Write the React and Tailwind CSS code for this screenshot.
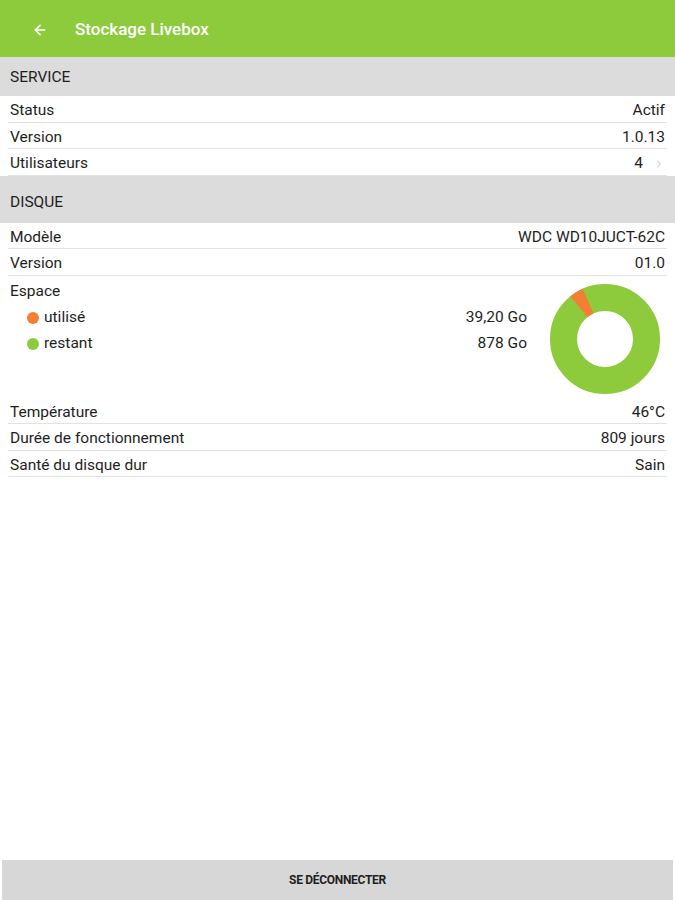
import { ArrowLeft, ChevronRight } from 'lucide-react';

const GREEN = '#8dcb3c';
const ORANGE = '#f57e37';

const Row = ({ label, value, chevron }) => (
  <div className="mx-2 flex h-[26.5px] items-center justify-between border-b border-[#e2e2e2] px-[2px] pt-[4px] text-[15.5px] text-[#1e1e1e]">
    <span>{label}</span>
    <span className="flex items-center">
      {value}
      {chevron && <ChevronRight className="ml-[10px] h-3 w-3 text-[#bdbdbd]" strokeWidth={2} />}
    </span>
  </div>
);

const Section = ({ title, tall }) => (
  <div className={`flex items-center bg-[#dcdcdc] px-[10px] text-[15.5px] text-[#1e1e1e] ${tall ? 'h-[47px] pt-[8px]' : 'h-[39px] pt-[3px]'}`}>
    {title}
  </div>
);

// donut: used slice sits between -39deg and -24deg (from 12 o'clock)
const Donut = () => {
  const cx = 55;
  const cy = 55;
  const r = 41.5;
  const pt = (deg) => {
    const a = ((deg - 90) * Math.PI) / 180;
    return [cx + r * Math.cos(a), cy + r * Math.sin(a)];
  };
  const [x1, y1] = pt(-39);
  const [x2, y2] = pt(-24);
  return (
    <svg width="110" height="110" viewBox="0 0 110 110">
      <circle cx={cx} cy={cy} r={r} fill="none" stroke={GREEN} strokeWidth="27" />
      <path d={`M ${x1} ${y1} A ${r} ${r} 0 0 1 ${x2} ${y2}`} fill="none" stroke={ORANGE} strokeWidth="27" />
    </svg>
  );
};

export default function App() {
  return (
    <div className="flex h-[900px] w-[675px] flex-col bg-white" style={{ fontFamily: 'Roboto, "Liberation Sans", sans-serif' }}>
      <div className="flex h-[57px] items-center bg-[#8dcb3c] pt-[2px] text-white">
        <ArrowLeft className="ml-[32px] h-[16px] w-[16px]" strokeWidth={2.5} />
        <span className="ml-[27px] text-[17px] font-medium">Stockage Livebox</span>
      </div>

      <Section title="SERVICE" />
      <Row label="Status" value="Actif" />
      <Row label="Version" value="1.0.13" />
      <Row label="Utilisateurs" value="4" chevron />

      <Section title="DISQUE" tall />
      <Row label="Modèle" value="WDC WD10JUCT-62C" />
      <Row label="Version" value="01.0" />

      <div className="mx-2 flex h-[122px] px-[2px] text-[15.5px] text-[#1e1e1e]">
        <div className="flex flex-1 flex-col pt-[3px]">
          <div className="flex h-[26px] items-center">Espace</div>
          <div className="flex h-[26px] items-center justify-between pl-[17px]">
            <span className="flex items-center">
              <span className="mr-[5px] h-[12px] w-[12px] rounded-full bg-[#f57e37]" />
              utilisé
            </span>
            <span>39,20 Go</span>
          </div>
          <div className="flex h-[26px] items-center justify-between pl-[17px]">
            <span className="flex items-center">
              <span className="mr-[5px] h-[12px] w-[12px] rounded-full bg-[#8dcb3c]" />
              restant
            </span>
            <span>878 Go</span>
          </div>
        </div>
        <div className="ml-[23px] mr-[5px] pt-[8px]">
          <Donut />
        </div>
      </div>

      <Row label="Température" value="46°C" />
      <Row label="Durée de fonctionnement" value="809 jours" />
      <Row label="Santé du disque dur" value="Sain" />

      <div className="flex-1" />
      <div className="mx-[2px] flex h-[40px] items-center justify-center bg-[#d7d7d7] text-[12px] font-bold tracking-tight text-[#1e1e1e]">
        SE DÉCONNECTER
      </div>
    </div>
  );
}
